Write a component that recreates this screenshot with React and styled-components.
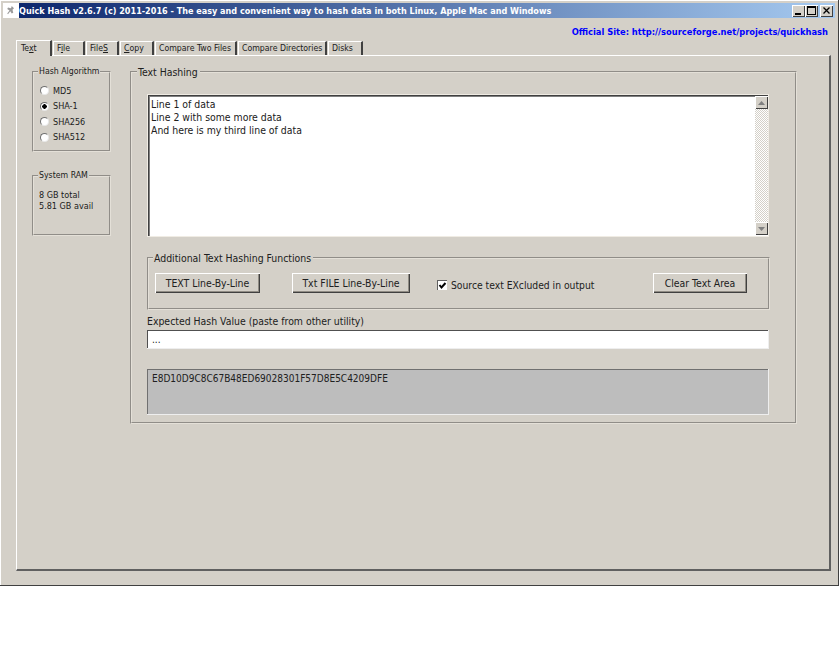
import React from 'react';
import styled, { createGlobalStyle } from 'styled-components';

const GlobalStyle = createGlobalStyle`
  html, body {
    margin: 0;
    padding: 0;
    background: #fff;
  }
  * {
    box-sizing: border-box;
  }
`;

const FACE = '#d4d0c8';
const UI_FONT = '"DejaVu Sans Condensed", "DejaVu Sans", Tahoma, sans-serif';

const TABS = [
  { key: 'text', width: 36, label: <>Te<u>x</u>t</> },
  { key: 'file', width: 32, label: <>F<u>i</u>le</> },
  { key: 'files', width: 33, label: <>File<u>S</u></> },
  { key: 'copy', width: 34, label: <><u>C</u>opy</> },
  { key: 'two', width: 82, label: 'Compare Two Files' },
  { key: 'dirs', width: 89, label: 'Compare Directories' },
  { key: 'disks', width: 35, label: 'Disks' },
];

const ALGORITHMS = ['MD5', 'SHA-1', 'SHA256', 'SHA512'];

export default function App() {
  return (
    <>
      <GlobalStyle />
      <Window>
        <TitleBar>
          <AppIcon viewBox="0 0 16 16">
            <path d="M9 2l3 3-2 2 1 4-2 1-2-3-3 4-1-1 3-4-3-2 1-2 4 1z" fill="#9a9a9a" />
          </AppIcon>
          <TitleText>Quick Hash v2.6.7 (c) 2011-2016 - The easy and convenient way to hash data in both Linux, Apple Mac and Windows</TitleText>
          <WinButtons>
            <WinButton>
              <svg width="9" height="9" viewBox="0 0 9 9"><path d="M1 7h6v2H1z" fill="#000" /></svg>
            </WinButton>
            <WinButton>
              <svg width="9" height="9" viewBox="0 0 9 9"><path d="M0 0h9v9H0z M1 2v6h7V2z" fill="#000" fillRule="evenodd" /></svg>
            </WinButton>
            <WinButton $gap>
              <svg width="9" height="9" viewBox="0 0 9 9"><path d="M1.5 1.5l6 6M7.5 1.5l-6 6" stroke="#000" strokeWidth="1.3" /></svg>
            </WinButton>
          </WinButtons>
        </TitleBar>

        <SiteRow>
          <SiteLink>Official Site: http://sourceforge.net/projects/quickhash</SiteLink>
        </SiteRow>

        <TabStrip>
          {TABS.map((tab, i) => (
            <Tab key={tab.key} $active={i === 0} $width={tab.width}>{tab.label}</Tab>
          ))}
        </TabStrip>

        <TabPanel>
          <Sidebar>
            <AlgoBox>
              <SmallLegend $left={-2}>Hash Algorithm</SmallLegend>
              {ALGORITHMS.map((name) => (
                <RadioRow key={name}>
                  <Radio $checked={name === 'SHA-1'} />
                  {name}
                </RadioRow>
              ))}
            </AlgoBox>
            <RamBox>
              <SmallLegend $left={-1}>System RAM</SmallLegend>
              <RamText>8 GB total<br />5.81 GB avail</RamText>
            </RamBox>
          </Sidebar>

          <TextHashing>
            <BigLegend $left={-10}>Text Hashing</BigLegend>
            <Memo>
              <MemoText>
                Line 1 of data<br />
                Line 2 with some more data<br />
                And here is my third line of data
              </MemoText>
              <ScrollTrack>
                <ScrollButton>
                  <svg width="7" height="4" viewBox="0 0 7 4"><path d="M3.5 0L7 4H0z" fill="#808080" /></svg>
                </ScrollButton>
                <ScrollButton>
                  <svg width="7" height="4" viewBox="0 0 7 4"><path d="M0 0h7L3.5 4z" fill="#808080" /></svg>
                </ScrollButton>
              </ScrollTrack>
            </Memo>

            <FunctionsBox>
              <BigLegend $left={-2}>Additional Text Hashing Functions</BigLegend>
              <PushButton $width={105}>TEXT Line-By-Line</PushButton>
              <PushButton $width={118} $left={32}>Txt FILE Line-By-Line</PushButton>
              <CheckRow>
                <CheckBox>
                  <svg width="9" height="9" viewBox="0 0 9 9"><path d="M1.5 4l2 2.5L7.5 2" fill="none" stroke="#000" strokeWidth="2" /></svg>
                </CheckBox>
                Source text EXcluded in output
              </CheckRow>
              <PushButton $width={94} $left={31}>Clear Text Area</PushButton>
            </FunctionsBox>

            <FieldLabel>Expected Hash Value (paste from other utility)</FieldLabel>
            <ValueInput>...</ValueInput>
            <ResultBox>E8D10D9C8C67B48ED69028301F57D8E5C4209DFE</ResultBox>
          </TextHashing>
        </TabPanel>
      </Window>
    </>
  );
}

const Window = styled.div`
  width: 839px;
  height: 586px;
  padding: 3px 3px 0 3px;
  background: ${FACE};
  border-right: 1px solid #404040;
  border-bottom: 1px solid #404040;
  box-shadow: inset 1px 1px 0 #fff;
  font-family: ${UI_FONT};
  font-size: 9px;
  color: #202020;
`;

const TitleBar = styled.div`
  height: 15px;
  display: flex;
  align-items: center;
  background: linear-gradient(to right, #0a246a, #a6caf0);
`;

const AppIcon = styled.svg`
  width: 16px;
  height: 15px;
  padding: 1px 2px;
  background: #fff;
  flex: none;
`;

const TitleText = styled.div`
  flex: 1;
  color: #fff;
  font-weight: bold;
  font-size: 9px;
  white-space: nowrap;
  overflow: hidden;
`;

const WinButtons = styled.div`
  display: flex;
  padding-right: 2px;
`;

const WinButton = styled.div`
  width: 13px;
  height: 12px;
  margin-left: ${(p) => (p.$gap ? 2 : 0)}px;
  display: flex;
  align-items: center;
  justify-content: center;
  background: ${FACE};
  box-shadow: inset 1px 1px 0 #fff, inset -1px -1px 0 #404040;
`;

const SiteRow = styled.div`
  height: 22px;
  display: flex;
  align-items: center;
  justify-content: flex-end;
  padding: 4px 7px 0 0;
`;

const SiteLink = styled.div`
  color: #0000ff;
  font-weight: bold;
  font-size: 9.25px;
  white-space: nowrap;
`;

const TabStrip = styled.div`
  height: 15px;
  margin-left: 13px;
  display: flex;
  align-items: flex-end;
`;

const Tab = styled.div`
  width: ${(p) => p.$width}px;
  height: ${(p) => (p.$active ? 16 : 14)}px;
  margin-right: 1px;
  margin-bottom: ${(p) => (p.$active ? -1 : 0)}px;
  padding-left: ${(p) => (p.$active ? 4 : 3)}px;
  font-size: 8.7px;
  line-height: ${(p) => (p.$active ? 14 : 13)}px;
  white-space: nowrap;
  background: ${FACE};
  border-top: 1px solid #fff;
  border-left: 1px solid #fff;
  border-right: 2px solid #404040;
  position: relative;
  z-index: ${(p) => (p.$active ? 1 : 0)};
`;

const TabPanel = styled.div`
  width: 815px;
  height: 516px;
  margin-left: 13px;
  display: flex;
  align-items: flex-start;
  padding: 10px 0 0 15px;
  background: ${FACE};
  border-top: 1px solid #fff;
  border-left: 1px solid #fff;
  border-right: 2px solid #606060;
  border-bottom: 2px solid #606060;
`;

const Sidebar = styled.div`
  width: 79px;
  flex: none;
  display: flex;
  flex-direction: column;
  gap: 18px;
`;

const Etched = styled.fieldset`
  margin: 0;
  min-width: 0;
  border: 2px groove #e4e0d8;
`;

const AlgoBox = styled(Etched)`
  height: 86px;
  padding: 6px 0 0 6px;
`;

const RamBox = styled(Etched)`
  height: 66px;
  padding: 9px 0 0 5px;
`;

const SmallLegend = styled.legend`
  padding: 0 1px;
  margin-left: ${(p) => p.$left}px;
  font-size: 8.7px;
  line-height: 11px;
  white-space: nowrap;
`;

const RadioRow = styled.div`
  height: 15.5px;
  display: flex;
  align-items: center;
  gap: 4px;
  white-space: nowrap;
`;

const Radio = styled.span`
  width: 9px;
  height: 9px;
  flex: none;
  border-radius: 50%;
  background: ${(p) => (p.$checked ? 'radial-gradient(circle, #000 0 2px, #fff 2.5px)' : '#fff')};
  border: 1px solid #707070;
  border-right-color: #e8e8e8;
  border-bottom-color: #e8e8e8;
`;

const RamText = styled.div`
  line-height: 11px;
`;

const TextHashing = styled(Etched)`
  width: 667px;
  height: 358px;
  margin: 0 0 0 19px;
  padding: 16px 0 0 15px;
`;

const BigLegend = styled.legend`
  padding: 0 2px 0 1px;
  margin-left: ${(p) => p.$left}px;
  font-size: 10.4px;
  line-height: 12px;
  white-space: nowrap;
`;

const Memo = styled.div`
  width: 622px;
  height: 143px;
  display: flex;
  background: #fff;
  border: 1px solid #f0ece4;
  box-shadow: inset 1px 1px 0 #404040, inset 2px 2px 0 #808080;
`;

const MemoText = styled.div`
  flex: 1;
  padding: 3px 0 0 3px;
  font-size: 10.4px;
  line-height: 13px;
`;

const ScrollTrack = styled.div`
  width: 13px;
  margin: 1px 0;
  display: flex;
  flex-direction: column;
  justify-content: space-between;
  background: repeating-conic-gradient(#d4d0c8 0 25%, #fff 0 50%) 0 0 / 2px 2px;
`;

const ScrollButton = styled.div`
  height: 13px;
  display: flex;
  align-items: center;
  justify-content: center;
  background: ${FACE};
  box-shadow: inset 1px 1px 0 #fff, inset -1px -1px 0 #404040;
`;

const FunctionsBox = styled(Etched)`
  width: 623px;
  height: 58px;
  margin: 15px 0 0 0;
  padding: 9px 0 0 6px;
  display: flex;
  align-items: flex-start;
`;

const PushButton = styled.div`
  width: ${(p) => p.$width}px;
  height: 20px;
  margin-left: ${(p) => p.$left || 0}px;
  flex: none;
  display: flex;
  align-items: center;
  justify-content: center;
  font-size: 10.4px;
  white-space: nowrap;
  background: ${FACE};
  box-shadow: inset 1px 1px 0 #fff, inset -1px -1px 0 #404040, inset -2px -2px 0 #908c84;
`;

const CheckRow = styled.div`
  width: 185px;
  flex: none;
  margin: 6px 0 0 27px;
  display: flex;
  align-items: center;
  gap: 4px;
  font-size: 10.25px;
  white-space: nowrap;
`;

const CheckBox = styled.span`
  width: 10px;
  height: 10px;
  flex: none;
  display: flex;
  background: #fff;
  box-shadow: inset 1px 1px 0 #606060;
  padding: 1px 0 0 1px;
`;

const FieldLabel = styled.div`
  margin-top: 4px;
  height: 15px;
  line-height: 15px;
  font-size: 10.4px;
  white-space: nowrap;
`;

const ValueInput = styled.div`
  width: 622px;
  height: 19px;
  margin-top: 1px;
  padding: 2px 0 0 5px;
  line-height: 15px;
  font-size: 10px;
  background: #fff;
  border-right: 1px solid #eee;
  border-bottom: 1px solid #eee;
  box-shadow: inset 1px 1px 0 #505050;
`;

const ResultBox = styled.div`
  width: 622px;
  height: 46px;
  margin-top: 20px;
  padding: 4px 0 0 5px;
  line-height: 12px;
  font-size: 10px;
  background: #bdbdbd;
  border-right: 1px solid #eee;
  border-bottom: 1px solid #eee;
  box-shadow: inset 1px 1px 0 #707070;
`;
